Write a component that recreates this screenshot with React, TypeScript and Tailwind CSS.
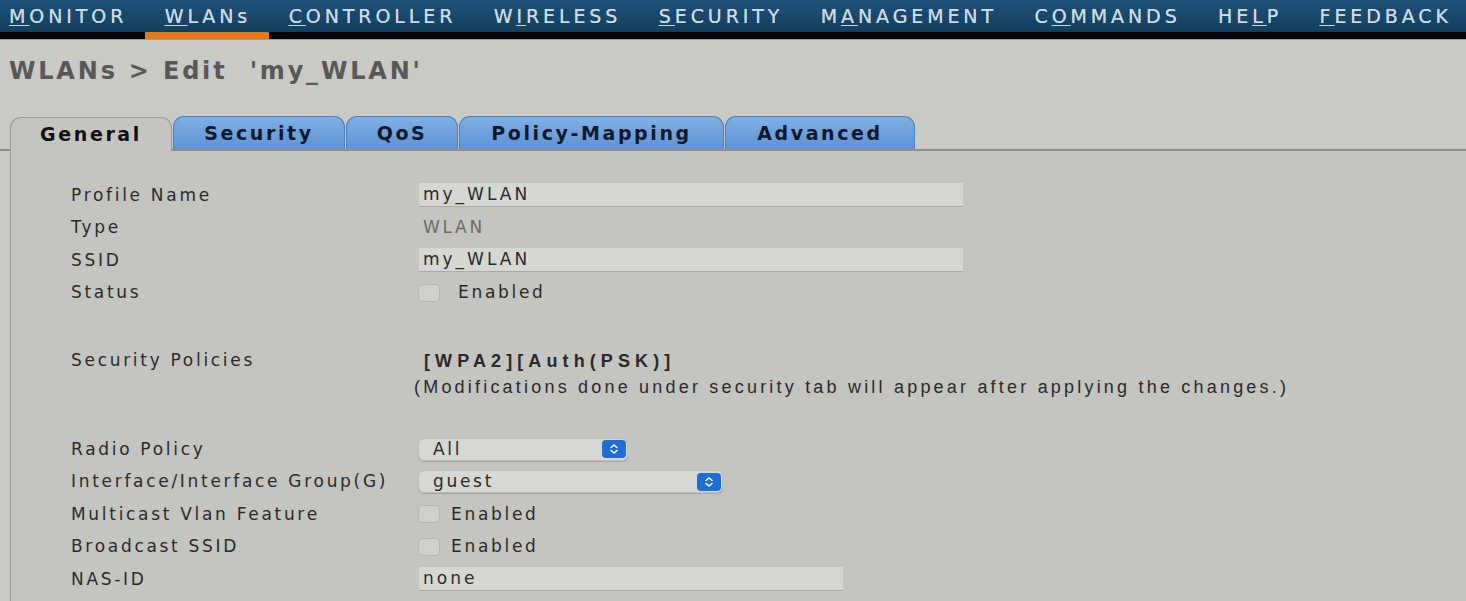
import React from 'react';

const navItems = [
  { pre: '', key: 'M', post: 'ONITOR' },
  { pre: '', key: 'W', post: 'LANs', active: true },
  { pre: '', key: 'C', post: 'ONTROLLER' },
  { pre: 'W', key: 'I', post: 'RELESS' },
  { pre: '', key: 'S', post: 'ECURITY' },
  { pre: 'M', key: 'A', post: 'NAGEMENT' },
  { pre: 'C', key: 'O', post: 'MMANDS' },
  { pre: 'HE', key: 'L', post: 'P' },
  { pre: '', key: 'F', post: 'EEDBACK' },
];

const tabs = [
  { name: 'General', w: 'w-[162px]', active: true },
  { name: 'Security', w: 'w-[172px]' },
  { name: 'QoS', w: 'w-[112px]' },
  { name: 'Policy-Mapping', w: 'w-[265px]' },
  { name: 'Advanced', w: 'w-[190px]' },
];

function Row({ label, children }: { label: string; children?: React.ReactNode }) {
  return (
    <div className="flex items-center h-[32.5px]">
      <div className="w-[347px] shrink-0 text-[17px] tracking-[2.7px] text-[#2b2b2b]">{label}</div>
      <div className="flex items-center">{children}</div>
    </div>
  );
}

function TextBox({ value, w }: { value: string; w: string }) {
  return (
    <div
      className={`${w} h-[24px] ml-px flex items-center pl-[4px] bg-[#d6d6d2] border-b border-[#a9a9a5] text-[17px] tracking-[3px] text-[#2a2a2a]`}
    >
      {value}
    </div>
  );
}

function CheckBox({ label, gap }: { label: string; gap: string }) {
  return (
    <div className="flex items-center">
      <div className="w-[22px] h-[18px] rounded-[4px] bg-[#cfcfcb] border border-[#b5b5b1]" />
      <span className={`${gap} text-[17px] tracking-[2.7px] text-[#2a2a2a]`}>{label}</span>
    </div>
  );
}

function Select({ value, w }: { value: string; w: string }) {
  return (
    <div
      className={`${w} h-[23px] rounded-[6px] bg-[#d7d7d3] border border-[#bdbdb9] shadow-[0_1px_1px_rgba(0,0,0,0.15)] flex items-center justify-between pl-[14px] pr-[1px]`}
    >
      <span className="text-[17px] tracking-[2.7px] text-[#2a2a2a]">{value}</span>
      <div className="w-[24px] h-[18px] rounded-[4px] bg-[#1d6fd6] flex items-center justify-center">
        <svg width="10" height="12" viewBox="0 0 10 12" fill="none" stroke="#ffffff" strokeWidth="1.6" strokeLinecap="round" strokeLinejoin="round">
          <path d="M2 4.5 L5 2 L8 4.5" />
          <path d="M2 7.5 L5 10 L8 7.5" />
        </svg>
      </div>
    </div>
  );
}

export default function App() {
  return (
    <div className="w-[1466px] h-[601px] overflow-hidden bg-[#c9c9c5] font-['DejaVu_Sans',Verdana,sans-serif]">
      {/* Top menu */}
      <nav className="flex bg-gradient-to-b from-[#1e5076] to-[#133f5e] border-b-[7px] border-[#050505] -ml-[11px]">
        {navItems.map((item) => (
          <div key={item.key + item.post} className="relative h-[32px] flex items-center pl-[20px] pr-[17.5px]">
            <span className="text-[19px] tracking-[3.9px] text-[#cad9e2] leading-none [text-shadow:0_0_0.6px_#cad9e2]">
              {item.pre}
              <span className="underline underline-offset-[2px] decoration-1">{item.key}</span>
              {item.post}
            </span>
            {item.active && <div className="absolute left-0 right-0 top-full h-[7px] bg-[#e3780f]" />}
          </div>
        ))}
      </nav>
      <div className="h-px bg-[#9c9c98]" />

      {/* Title */}
      <div className="pl-[9px] pt-[13px] h-[76px]">
        <h1 className="whitespace-pre text-[24px] font-bold tracking-[2.8px] text-[#585858]">
          {"WLANs > Edit  'my_WLAN'"}
        </h1>
      </div>

      {/* Tabs */}
      <div className="flex items-end pl-[10px] gap-px border-b-2 border-[#8d8d89]">
        {tabs.map((t) =>
          t.active ? (
            <div
              key={t.name}
              className={`${t.w} h-[34px] -mb-[2px] rounded-t-[11px] border border-b-0 border-[#9a9a96] bg-[#c4c4c0] flex items-center justify-center text-[19px] font-bold tracking-[2.6px] text-[#111]`}
            >
              {t.name}
            </div>
          ) : (
            <div
              key={t.name}
              className={`${t.w} h-[33px] rounded-t-[11px] border border-b-0 border-[#4d7fb8] bg-gradient-to-b from-[#7fb0e6] to-[#5e93d3] flex items-center justify-center text-[19px] font-bold tracking-[2.6px] text-[#0d1a2c]`}
            >
              {t.name}
            </div>
          )
        )}
      </div>

      {/* Panel */}
      <div className="ml-[10px] border-l border-[#9a9a96] bg-[#c4c4c0] h-[460px] pl-[60px] pt-[28px]">
        <Row label="Profile Name">
          <TextBox value="my_WLAN" w="w-[544px]" />
        </Row>
        <Row label="Type">
          <span className="pl-[5px] text-[17px] tracking-[2.7px] text-[#6b6b6b]">WLAN</span>
        </Row>
        <Row label="SSID">
          <TextBox value="my_WLAN" w="w-[544px]" />
        </Row>
        <Row label="Status">
          <CheckBox label="Enabled" gap="ml-[18px]" />
        </Row>

        <div className="flex mt-[39px]">
          <div className="w-[347px] shrink-0 h-[26px] flex items-center text-[17px] tracking-[2.7px] text-[#2b2b2b]">
            Security Policies
          </div>
          <div className="font-['Liberation_Sans',Arial,sans-serif]">
            <div className="h-[26px] flex items-center pl-[6px] text-[18px] font-bold tracking-[5.1px] text-[#2a2a2a]">
              [WPA2][Auth(PSK)]
            </div>
            <div className="h-[26px] flex items-center -ml-[4px] text-[18px] tracking-[3.2px] text-[#2a2a2a] whitespace-nowrap">
              (Modifications done under security tab will appear after applying the changes.)
            </div>
          </div>
        </div>

        <div className="mt-[33px]">
          <Row label="Radio Policy">
            <Select value="All" w="w-[210px]" />
          </Row>
          <Row label="Interface/Interface Group(G)">
            <Select value="guest" w="w-[305px]" />
          </Row>
          <Row label="Multicast Vlan Feature">
            <CheckBox label="Enabled" gap="ml-[11px]" />
          </Row>
          <Row label="Broadcast SSID">
            <CheckBox label="Enabled" gap="ml-[11px]" />
          </Row>
          <Row label="NAS-ID">
            <TextBox value="none" w="w-[424px]" />
          </Row>
        </div>
      </div>
    </div>
  );
}
